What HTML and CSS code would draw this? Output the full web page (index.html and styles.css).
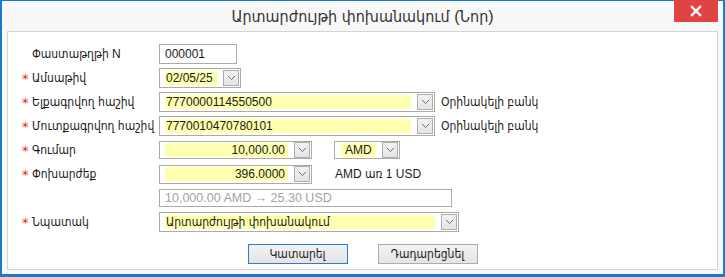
FILE: index.html
```html
<!DOCTYPE html>
<html lang="hy">
<head>
<meta charset="utf-8">
<title>Արտարժույթի փոխանակում</title>
<link rel="stylesheet" href="styles.css">
</head>
<body>
<div class="window">
  <div class="titlebar">Արտարժույթի փոխանակում (Նոր)</div>
  <div class="close"><svg width="12" height="12" viewBox="0 0 12 12"><path d="M2 2 L10 10 M10 2 L2 10" stroke="#fff" stroke-width="2.4" stroke-linecap="square"/></svg></div>
  <div class="panel">
    <div class="form">
      <div class="row">
        <div class="label"><span class="star"></span>Փաստաթղթի N</div>
        <div class="field doc">000001</div>
      </div>
      <div class="row">
        <div class="label"><span class="star">*</span>Ամսաթիվ</div>
        <div class="combo date"><span class="val">02/05/25</span><span class="dd"><svg width="9" height="6" viewBox="0 0 9 6"><path d="M1 1 L4.5 4.5 L8 1" fill="none" stroke="#707070" stroke-width="1"/></svg></span></div>
      </div>
      <div class="row">
        <div class="label"><span class="star">*</span>Ելքագրվող հաշիվ</div>
        <div class="combo acct"><span class="val">7770000114550500</span><span class="dd"><svg width="9" height="6" viewBox="0 0 9 6"><path d="M1 1 L4.5 4.5 L8 1" fill="none" stroke="#707070" stroke-width="1"/></svg></span></div>
        <span class="note bank">Օրինակելի բանկ</span>
      </div>
      <div class="row">
        <div class="label"><span class="star">*</span>Մուտքագրվող հաշիվ</div>
        <div class="combo acct"><span class="val">7770010470780101</span><span class="dd"><svg width="9" height="6" viewBox="0 0 9 6"><path d="M1 1 L4.5 4.5 L8 1" fill="none" stroke="#707070" stroke-width="1"/></svg></span></div>
        <span class="note bank">Օրինակելի բանկ</span>
      </div>
      <div class="row">
        <div class="label"><span class="star">*</span>Գումար</div>
        <div class="combo num short"><span class="val">10,000.00</span><span class="dd"><svg width="9" height="6" viewBox="0 0 9 6"><path d="M1 1 L4.5 4.5 L8 1" fill="none" stroke="#707070" stroke-width="1"/></svg></span></div>
        <div class="combo cur short"><span class="val">AMD</span><span class="dd"><svg width="9" height="6" viewBox="0 0 9 6"><path d="M1 1 L4.5 4.5 L8 1" fill="none" stroke="#707070" stroke-width="1"/></svg></span></div>
      </div>
      <div class="row">
        <div class="label"><span class="star">*</span>Փոխարժեք</div>
        <div class="combo num mid"><span class="val">396.0000</span><span class="dd"><svg width="9" height="6" viewBox="0 0 9 6"><path d="M1 1 L4.5 4.5 L8 1" fill="none" stroke="#707070" stroke-width="1"/></svg></span></div>
        <span class="note rate">AMD առ 1 USD</span>
      </div>
      <div class="row">
        <div class="label"></div>
        <div class="field info">10,000.00 AMD → 25.30 USD</div>
      </div>
      <div class="row">
        <div class="label"><span class="star">*</span>Նպատակ</div>
        <div class="combo purpose"><span class="val">Արտարժույթի փոխանակում</span><span class="dd"><svg width="9" height="6" viewBox="0 0 9 6"><path d="M1 1 L4.5 4.5 L8 1" fill="none" stroke="#707070" stroke-width="1"/></svg></span></div>
      </div>
    </div>
    <div class="buttons">
      <button class="btn primary">Կատարել</button>
      <button class="btn">Դադարեցնել</button>
    </div>
  </div>
</div>
</body>
</html>
```
FILE: styles.css
```css
html, body {
  margin: 0;
  padding: 0;
  background: #ffffff;
}
body {
  font-family: "Liberation Sans", "DejaVu Sans Condensed", "DejaVu Sans", sans-serif;
  font-size: 12px;
  color: #1b1b1b;
}
.window {
  position: relative;
  box-sizing: border-box;
  width: 725px;
  height: 277px;
  border-style: solid;
  border-color: #1979ca;
  border-width: 1px 2px 3px 2px;
  background: #f8f8f8;
  display: flex;
  flex-direction: column;
}
.titlebar {
  height: 30px;
  flex: none;
  display: flex;
  align-items: center;
  justify-content: center;
  font-size: 16px;
  color: #333333;
  padding-top: 1px;
  box-sizing: border-box;
}
.close {
  position: absolute;
  top: -1px;
  right: 5px;
  width: 44px;
  height: 22px;
  background: #e04343;
  display: flex;
  align-items: center;
  justify-content: center;
}
.close svg { display: block; }
.panel {
  flex: 1;
  margin: 0 5px 4px 5px;
  border: 1px solid #d3d3d3;
  background: #ffffff;
  padding-top: 10px;
  box-sizing: border-box;
}
.form {
  display: flex;
  flex-direction: column;
  padding-left: 14px;
}
.row {
  height: 24px;
  display: flex;
  align-items: center;
  white-space: nowrap;
}
.label {
  width: 137px;
  flex: none;
  display: flex;
  align-items: center;
}
.star {
  width: 10px;
  flex: none;
  color: #e41e26;
  font-family: "DejaVu Sans", sans-serif;
  font-size: 13px;
  line-height: 12px;
  height: 12px;
  position: relative;
  top: 1px;
}
.field, .combo {
  box-sizing: border-box;
  border: 1px solid #ababab;
  background: #ffffff;
  height: 20px;
  display: flex;
  align-items: center;
}
.field {
  padding-left: 5px;
}
.doc { width: 78px; }
.info {
  width: 293px;
  height: 18px;
  color: #a3a3a3;
  font-size: 12.5px;
}
.combo {
  padding: 0 1px 0 5px;
}
.combo .val {
  flex: 1;
  min-width: 0;
  background: #ffffb0;
  height: 14px;
  line-height: 14px;
  padding-left: 1px;
  white-space: nowrap;
  overflow: hidden;
}
.combo .dd {
  flex: none;
  width: 14px;
  height: 14px;
  margin-left: 6px;
  border: 1px solid #acacac;
  background: linear-gradient(#f3f3f3, #e3e3e3);
  display: flex;
  align-items: center;
  justify-content: center;
}
.combo .dd svg { display: block; }
.date { width: 82px; }
.acct { width: 276px; }
.num { width: 153px; }
.num .val { text-align: right; padding-right: 3px; }
.short { height: 18px; }
.mid { height: 19px; }
.cur {
  width: 66px;
  margin-left: 22px;
  padding-left: 6px;
}
.cur .val { padding-left: 4px; }
.purpose { width: 300px; }
.note {
  margin-left: 6px;
}
.rate { margin-left: 23px; }
.buttons {
  display: flex;
  justify-content: center;
  gap: 30px;
  margin-top: 10px;
}
.btn {
  box-sizing: border-box;
  width: 100px;
  height: 20px;
  border: 1px solid #adadad;
  background: linear-gradient(#f2f2f2, #e4e4e4);
  font-family: "Liberation Sans", "DejaVu Sans Condensed", "DejaVu Sans", sans-serif;
  font-size: 12px;
  color: #1b1b1b;
  padding: 0;
}
.btn.primary {
  border-color: #2b7bd3;
}
```
